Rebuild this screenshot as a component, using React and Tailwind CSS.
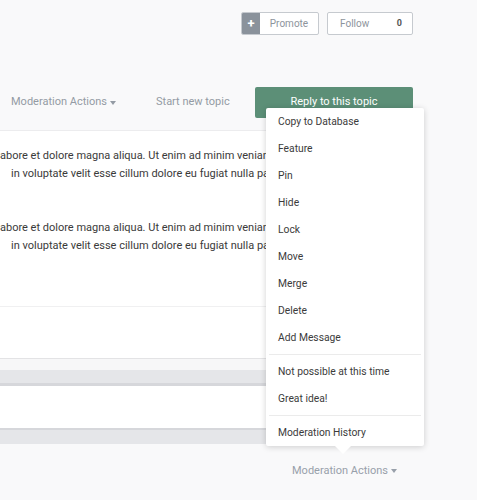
import React from 'react'

const menuGroups = [
  ['Copy to Database', 'Feature', 'Pin', 'Hide', 'Lock', 'Move', 'Merge', 'Delete', 'Add Message'],
  ['Not possible at this time', 'Great idea!'],
  ['Moderation History'],
]

const Caret = () => (
  <span className="ml-[3px] inline-block h-0 w-0 border-x-[3.5px] border-t-[4px] border-x-transparent border-t-current align-middle" />
)

const ModerationMenu = () => (
  <div className="absolute left-[266px] top-[108px] w-[158px] rounded-[2px] bg-white shadow-[0_1px_6px_rgba(0,0,0,0.18)]">
    {menuGroups.map((group, gi) => (
      <div key={gi} className={gi > 0 ? 'mx-[3px] mt-[3px] border-t border-[#ebebeb] pt-[3px]' : ''}>
        {group.map((item) => (
          <div key={item} className={`flex h-[27px] items-center text-[10.3px] text-[#3b3b3b] ${gi > 0 ? 'px-[9px]' : 'px-[12px]'}`}>
            {item}
          </div>
        ))}
      </div>
    ))}
    <div className="absolute left-[69px] top-full h-0 w-0 border-x-[8px] border-t-[8px] border-x-transparent border-t-white" />
  </div>
)

export default function App() {
  return (
    <div className="relative h-[500px] w-[477px] overflow-hidden bg-[#f9f9fa] font-['Roboto','Liberation_Sans',sans-serif]">
      <div className="flex justify-end gap-[8px] pr-[64px] pt-[12px]">
        <button className="flex h-[23px] w-[78px] items-stretch overflow-hidden rounded-[2px] border border-[#c6cacf] bg-white">
          <span className="flex w-[18px] items-center justify-center bg-[#8a929b] text-[13px] font-bold leading-none text-white">+</span>
          <span className="flex flex-1 items-center justify-center text-[10px] text-[#8d949c]">Promote</span>
        </button>
        <button className="flex h-[23px] w-[86px] items-center justify-between rounded-[2px] border border-[#c6cacf] bg-white pl-[12px] pr-[10px] text-[10px] text-[#8d949c]">
          <span>Follow</span>
          <span className="text-[9px] font-bold text-[#555]">0</span>
        </button>
      </div>

      <div className="mt-[52px] flex h-[31px] items-center text-[11px] text-[#949ba4]">
        <span className="ml-[11px] flex w-[145px] items-center">
          Moderation Actions
          <Caret />
        </span>
        <span className="w-[99px]">Start new topic</span>
        <button className="flex h-[31px] w-[158px] items-center justify-center rounded-[2px] bg-[#5c8f77] text-[11px] text-white">
          Reply to this topic
        </button>
      </div>

      <div className="mt-[12px] w-[413px] border-t border-[#ececee] bg-white">
        <div className="w-[266px] overflow-hidden whitespace-nowrap pt-[16px] text-[11px] leading-[18px] text-[#3a3a3a]">
          <p>abore et dolore magna aliqua. Ut enim ad minim veniam, quis nostrud exercitation</p>
          <p className="pl-[11px]">in voluptate velit esse cillum dolore eu fugiat nulla pariatur.</p>
          <p className="mt-[36px]">abore et dolore magna aliqua. Ut enim ad minim veniam, quis nostrud exercitation</p>
          <p className="pl-[11px]">in voluptate velit esse cillum dolore eu fugiat nulla pariatur.</p>
        </div>
        <div className="mt-[51px] h-[52px] border-t border-[#f0f0f1]" />
      </div>

      <div className="w-[413px] border-t border-[#e3e3e5] bg-[#f7f7f8]">
        <div className="mt-[11px] h-[16px] border-b-[3px] border-[#d6d7db] bg-[#e5e6e9]" />
        <div className="h-[42px] bg-white" />
        <div className="h-[16px] border-t-[2px] border-[#d6d7db] bg-[#e5e6e9]" />
      </div>

      <div className="mt-[19px] flex pl-[292px] text-[11px] text-[#98a0aa]">
        <span className="flex items-center">
          Moderation Actions
          <Caret />
        </span>
      </div>

      <ModerationMenu />
    </div>
  )
}
